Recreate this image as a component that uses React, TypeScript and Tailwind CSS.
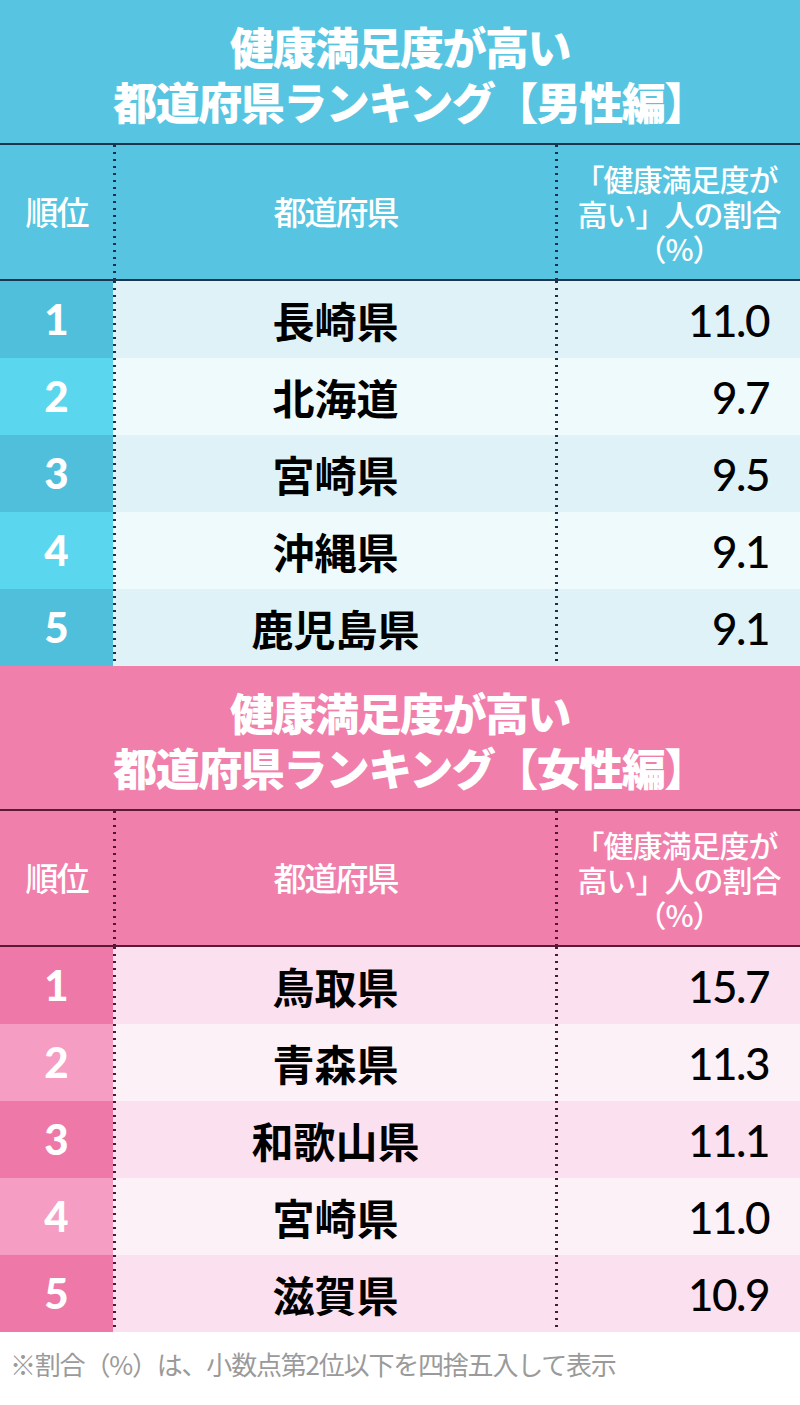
import React from "react";

type Row = { rank: number; pref: string; value: string };

interface Theme {
  title: string;
  line: string;
  dot: string;
  rankOdd: string;
  rankEven: string;
  cellOdd: string;
  cellEven: string;
}

const MALE: Row[] = [
  { rank: 1, pref: "長崎県", value: "11.0" },
  { rank: 2, pref: "北海道", value: "9.7" },
  { rank: 3, pref: "宮崎県", value: "9.5" },
  { rank: 4, pref: "沖縄県", value: "9.1" },
  { rank: 5, pref: "鹿児島県", value: "9.1" },
];

const FEMALE: Row[] = [
  { rank: 1, pref: "鳥取県", value: "15.7" },
  { rank: 2, pref: "青森県", value: "11.3" },
  { rank: 3, pref: "和歌山県", value: "11.1" },
  { rank: 4, pref: "宮崎県", value: "11.0" },
  { rank: 5, pref: "滋賀県", value: "10.9" },
];

const BLUE: Theme = {
  title: "bg-[#57c5e1]",
  line: "border-[#1b3550]",
  dot: "bg-[linear-gradient(to_bottom,#1b2e4a_2px,transparent_2px)]",
  rankOdd: "bg-[#4fbfdb]",
  rankEven: "bg-[#5ad6ee]",
  cellOdd: "bg-[#dff2f8]",
  cellEven: "bg-[#effafd]",
};

const PINK: Theme = {
  title: "bg-[#f17fac]",
  line: "border-[#5a1a36]",
  dot: "bg-[linear-gradient(to_bottom,#4e1830_2px,transparent_2px)]",
  rankOdd: "bg-[#ee79a8]",
  rankEven: "bg-[#f59dc3]",
  cellOdd: "bg-[#fbe1ef]",
  cellEven: "bg-[#fdf1f8]",
};

const JP = "font-['Noto_Sans_CJK_JP','Noto_Sans',sans-serif]";

function Dots({ theme }: { theme: Theme }) {
  return (
    <div
      className={`w-[3px] self-stretch bg-[length:3px_7px] bg-repeat-y ${theme.dot}`}
    />
  );
}

function Ranking({
  label,
  rows,
  theme,
}: {
  label: string;
  rows: Row[];
  theme: Theme;
}) {
  return (
    <div>
      {/* Title */}
      <div
        className={`flex h-[143px] flex-col items-center justify-center pt-[4px] text-[44px] font-black leading-[55px] tracking-[-1.5px] text-white ${JP} ${theme.title}`}
      >
        <p>健康満足度が高い</p>
        <p className="ml-[20px]">都道府県ランキング【{label}】</p>
      </div>

      {/* Column header */}
      <div
        className={`flex h-[138px] border-y-2 text-white ${JP} ${theme.line} ${theme.title}`}
      >
        <div className="flex w-[113px] items-center justify-center text-[33px] font-medium tracking-[-2px]">
          順位
        </div>
        <Dots theme={theme} />
        <div className="flex w-[439px] items-center justify-center text-[33px] font-medium tracking-[-2px]">
          都道府県
        </div>
        <Dots theme={theme} />
        <div className="flex flex-1 flex-col items-center justify-center pt-[2px] text-[30px] font-medium leading-[35px] tracking-[-1px]">
          <p className="-ml-[6px]">「健康満足度が</p>
          <p>高い」人の割合</p>
          <p>（%）</p>
        </div>
      </div>

      {/* Rows */}
      {rows.map((r, i) => {
        const odd = i % 2 === 0;
        return (
          <div key={r.rank} className="flex h-[77px]">
            <div
              className={`flex w-[113px] items-center justify-center font-['Lato',sans-serif] text-[42px] font-black text-white ${
                odd ? theme.rankOdd : theme.rankEven
              }`}
            >
              {r.rank}
            </div>
            <div
              className={`flex flex-1 ${odd ? theme.cellOdd : theme.cellEven}`}
            >
              <Dots theme={theme} />
              <div
                className={`flex w-[439px] items-center justify-center text-[42px] font-bold text-black ${JP}`}
              >
                {r.pref}
              </div>
              <Dots theme={theme} />
              <div className="flex flex-1 items-center justify-end pr-[31px] font-['Lato',sans-serif] text-[44px] font-medium tracking-[-1.5px] text-black">
                {r.value}
              </div>
            </div>
          </div>
        );
      })}
    </div>
  );
}

export default function App() {
  return (
    <div className="h-[1405px] w-[800px] bg-white">
      <Ranking label="男性編" rows={MALE} theme={BLUE} />
      <Ranking label="女性編" rows={FEMALE} theme={PINK} />
      <p
        className={`pl-[10px] pt-[12px] text-[26px] tracking-[-1.2px] text-[#9a9a9a] ${JP}`}
      >
        ※割合（%）は、小数点第2位以下を四捨五入して表示
      </p>
    </div>
  );
}
